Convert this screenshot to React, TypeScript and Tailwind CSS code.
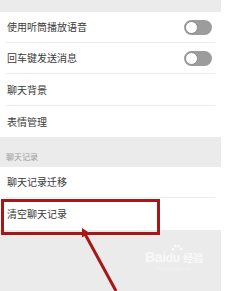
import React from "react";

const font = { fontFamily: '"Noto Sans CJK SC", "Noto Sans", sans-serif' };

function Toggle() {
  return (
    <div className="w-[28px] h-[15px] rounded-full bg-[#9c9c9c] flex items-center pl-px">
      <div className="w-[13px] h-[13px] rounded-full bg-white border border-[#8a8a8a]" />
    </div>
  );
}

function Row({ label, toggle, last, h = "h-[31px]" }: { label: string; toggle?: boolean; last?: boolean; h?: string }) {
  return (
    <div className={`${h} flex flex-col`}>
      <div className="flex-1 flex items-center justify-between pl-[7px] pr-[9px]">
        <span className="text-[10px] leading-none text-[#3a3a3a]">{label}</span>
        {toggle && <Toggle />}
      </div>
      {!last && <div className="mx-[6px] h-px bg-[#ececec]" />}
    </div>
  );
}

export default function App() {
  return (
    <div className="relative w-[225px] h-[291px] bg-white overflow-hidden" style={font}>
      <div className="w-[221px] h-full bg-[#ebebeb] flex flex-col">
        <div className="h-[12px]" />
        <div className="bg-white">
          <Row label="使用听筒播放语音" toggle />
          <Row label="回车键发送消息" toggle />
          <Row label="聊天背景" h="h-[32px]" />
          <Row label="表情管理" last />
        </div>
        <div className="h-[30px] flex items-end pl-[6px] pb-[6px]">
          <span className="text-[8px] leading-none text-[#9a9a9a]">聊天记录</span>
        </div>
        <div className="bg-white">
          <Row label="聊天记录迁移" />
          <Row label="清空聊天记录" last h="h-[32px]" />
        </div>
      </div>

      {/* red highlight box */}
      <div className="absolute left-[1px] top-[199px] w-[159px] h-[36px] border-[3px] border-[#a81616]" />

      {/* arrow */}
      <svg className="absolute left-0 top-0" width="225" height="291" viewBox="0 0 225 291">
        <line x1="85" y1="234" x2="116" y2="291" stroke="#a81616" strokeWidth="3" />
        <polygon points="82,228 89.5,233 82,237.5" fill="#a81616" />
      </svg>

      {/* watermark */}
      <div className="absolute left-[145px] top-[250px] flex flex-col items-center text-white/70 leading-none">
        <svg className="absolute left-[26px] -top-[6px]" width="12" height="10" viewBox="0 0 12 10" fill="currentColor">
          <circle cx="2" cy="5" r="1.5" />
          <circle cx="4.5" cy="2" r="1.5" />
          <circle cx="7.5" cy="2" r="1.5" />
          <circle cx="10" cy="5" r="1.5" />
        </svg>
        <span className="text-[14px] font-bold tracking-tight" style={{ fontFamily: '"Liberation Sans", sans-serif' }}>
          Bai<span className="text-[12px]">du</span> <span className="text-[10px]" style={font}>经验</span>
        </span>
        <span className="text-[4px] mt-[2px] text-white/50">jingyan.baidu.com</span>
      </div>
    </div>
  );
}
